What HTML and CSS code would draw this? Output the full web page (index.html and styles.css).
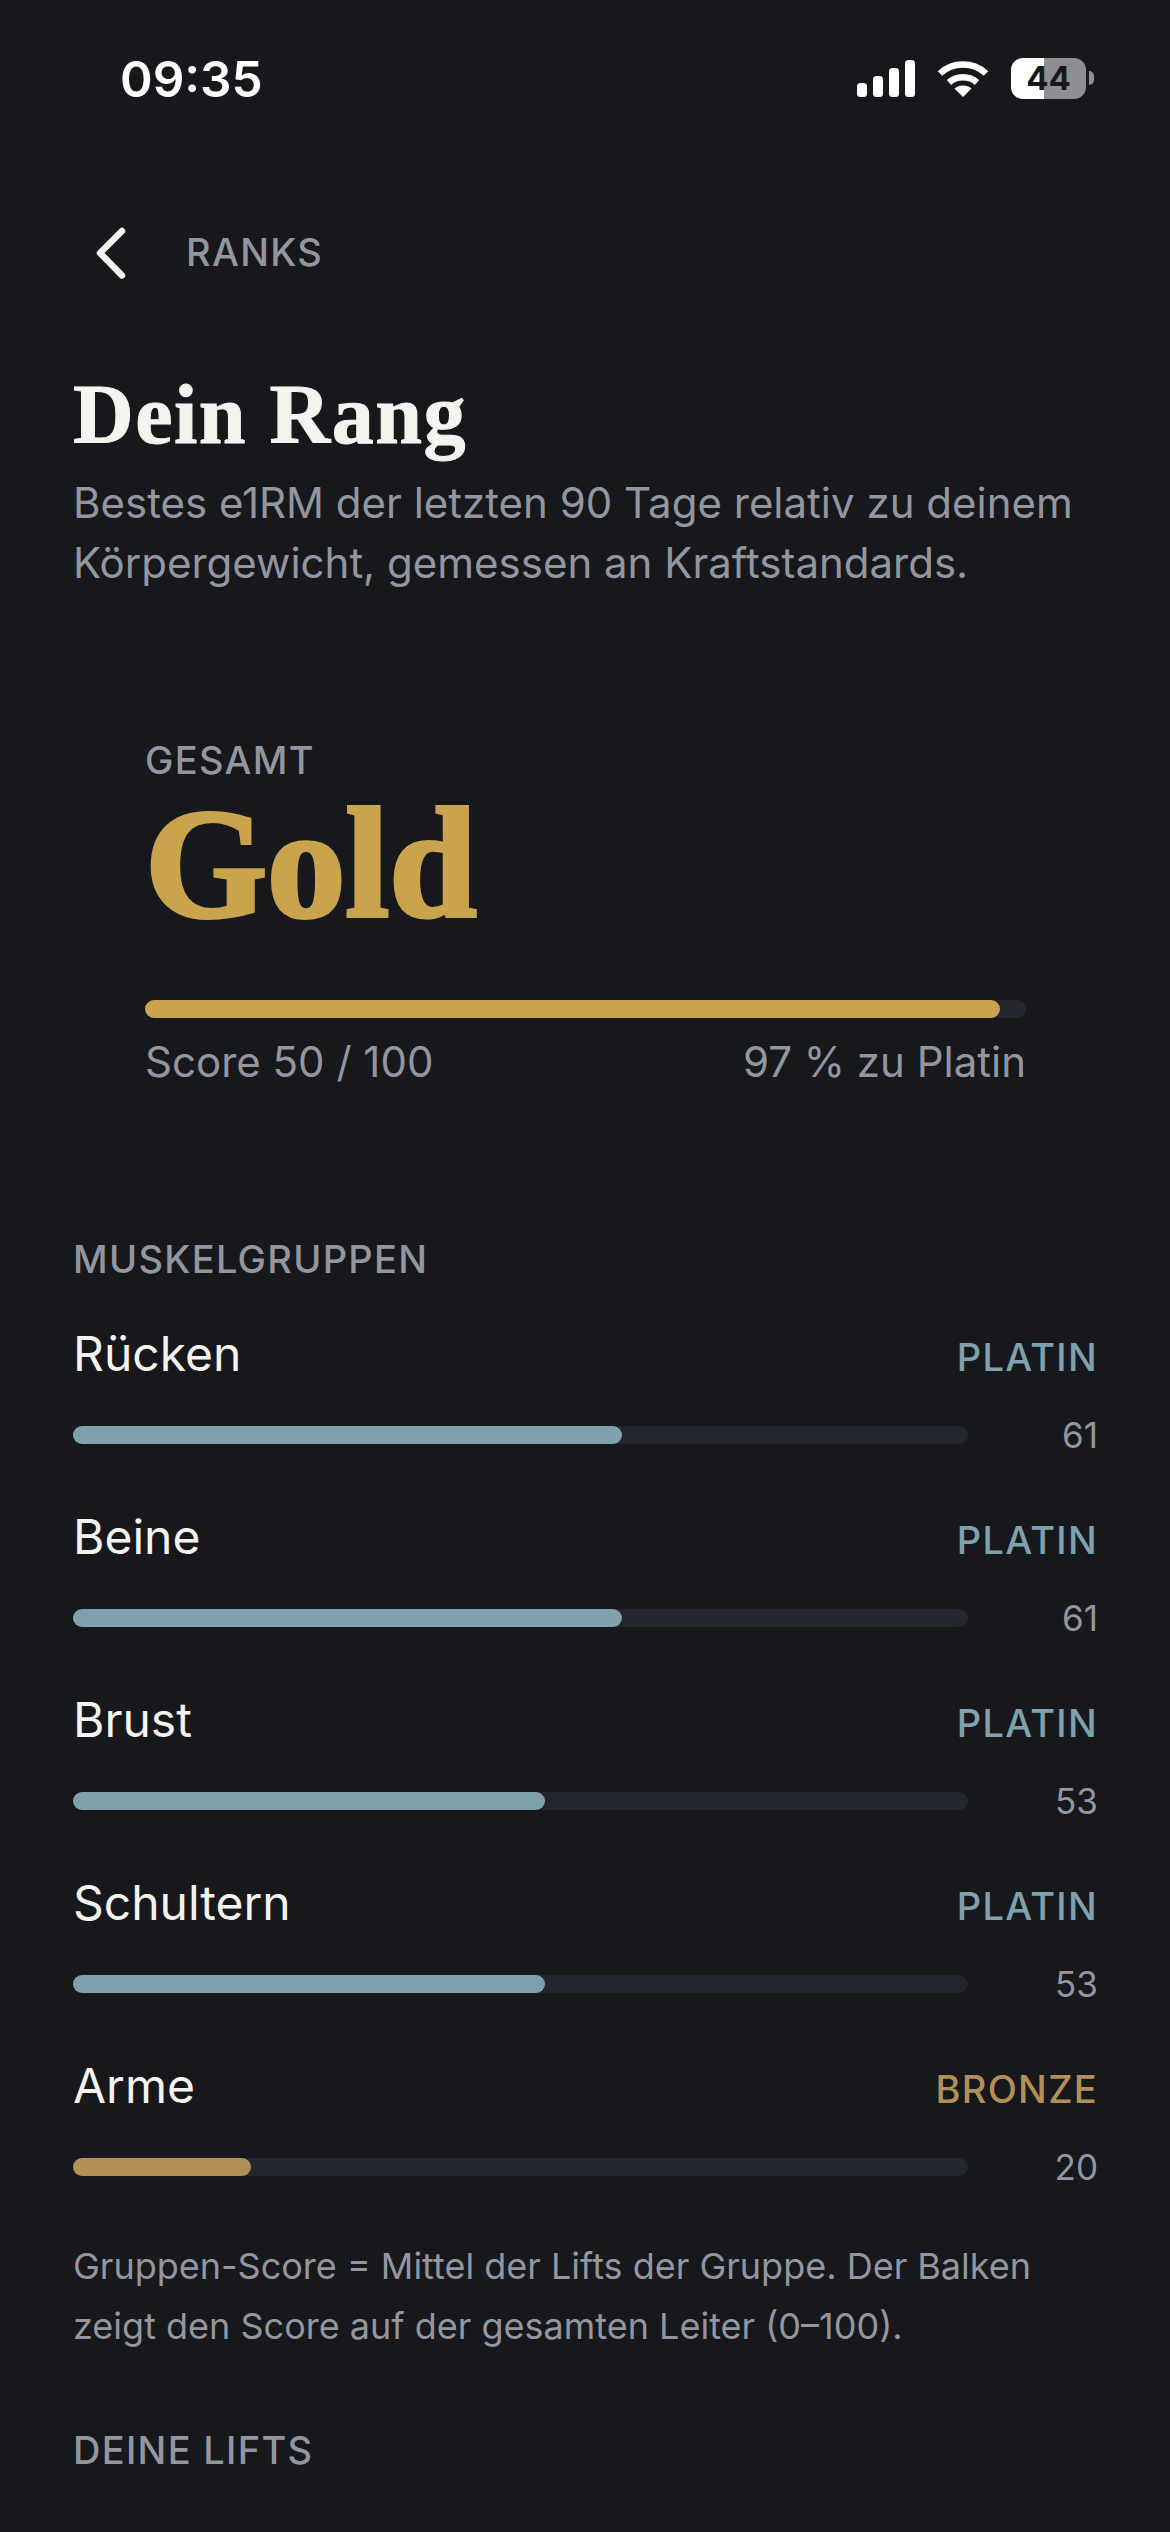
FILE: index.html
```html
<!DOCTYPE html>
<html lang="de">
<head>
    <meta charset="utf-8">
    <title>Dein Rang</title>
    <link rel="stylesheet" href="styles.css">
</head>
<body>
    <div class="status">
        <span class="time">09:35</span>
        <div class="status_icons">
            <svg class="signal" width="58" height="37" viewBox="0 0 58 37" fill="#fff">
                <rect x="0" y="23" width="10" height="14" rx="3.5"/>
                <rect x="16" y="16" width="10" height="21" rx="3.5"/>
                <rect x="32" y="8" width="10" height="29" rx="3.5"/>
                <rect x="48" y="0" width="10" height="37" rx="3.5"/>
            </svg>
            <svg class="wifi" width="52" height="37" viewBox="0 0 52 37" fill="none" stroke="#fff" stroke-width="6.5">
                <path d="M3 13.5C15.500 1.500 36.500 1.500 49 13.500"/>
                <path d="M12 22.500C19.500 15.500 32.500 15.500 40 22.500"/>
                <path d="M26 37L17.500 28.500C22 24.500 30 24.500 34.500 28.500Z" fill="#fff" stroke="none"/>
            </svg>
            <div class="battery"><span>44</span></div>
            <div class="battery_nub"></div>
        </div>
    </div>

    <div class="nav">
        <svg class="back" width="32" height="54" viewBox="0 0 32 54" fill="none" stroke="#f4f3ee" stroke-width="6.5" stroke-linecap="round" stroke-linejoin="round">
            <path d="M27 6L5 28L27 50.500"/>
        </svg>
        <span class="nav_title">RANKS</span>
    </div>

    <div class="page">
        <h1>Dein Rang</h1>
        <p class="intro">Bestes e1RM der letzten 90 Tage relativ zu deinem Körpergewicht, gemessen an Kraftstandards.</p>

        <div class="overall">
            <div class="label">GESAMT</div>
            <div class="rank">Gold</div>
            <div class="track big"><div class="fill gold" style="width: 97%"></div></div>
            <div class="overall_foot">
                <span>Score 50 / 100</span>
                <span>97 % zu Platin</span>
            </div>
        </div>

        <div class="label section">MUSKELGRUPPEN</div>

        <div class="groups">
            <div class="group">
                <div class="group_top"><span class="name">Rücken</span><span class="tier platin">PLATIN</span></div>
                <div class="group_bar"><div class="track"><div class="fill platin_bg" style="width: 61.300%"></div></div><span class="val">61</span></div>
            </div>
            <div class="group">
                <div class="group_top"><span class="name">Beine</span><span class="tier platin">PLATIN</span></div>
                <div class="group_bar"><div class="track"><div class="fill platin_bg" style="width: 61.300%"></div></div><span class="val">61</span></div>
            </div>
            <div class="group">
                <div class="group_top"><span class="name">Brust</span><span class="tier platin">PLATIN</span></div>
                <div class="group_bar"><div class="track"><div class="fill platin_bg" style="width: 52.700%"></div></div><span class="val">53</span></div>
            </div>
            <div class="group">
                <div class="group_top"><span class="name">Schultern</span><span class="tier platin">PLATIN</span></div>
                <div class="group_bar"><div class="track"><div class="fill platin_bg" style="width: 52.700%"></div></div><span class="val">53</span></div>
            </div>
            <div class="group">
                <div class="group_top"><span class="name">Arme</span><span class="tier bronze">BRONZE</span></div>
                <div class="group_bar"><div class="track"><div class="fill bronze_bg" style="width: 19.900%"></div></div><span class="val">20</span></div>
            </div>
        </div>

        <p class="note">Gruppen-Score = Mittel der Lifts der Gruppe. Der Balken zeigt den Score auf der gesamten Leiter (0–100).</p>

        <div class="label lifts">DEINE LIFTS</div>
    </div>
</body>
</html>
```

FILE: styles.css
```css
* {
    padding: 0;
    margin: 0;
    box-sizing: border-box;
}
html, body {
    height: 2532px;
    overflow: hidden;
}
body {
    background-color: #16181c;
    font-family: Inter, "Liberation Sans", sans-serif;
    color: #f4f3ee;
}
.status {
    height: 208px;
    padding: 48px 76px 0 120px;
    display: flex;
    justify-content: space-between;
    align-items: flex-start;
}
.time {
    font-size: 49.5px;
    line-height: 60px;
    font-weight: 600;
    color: #fff;
    padding-top: 1px;
}
.status_icons {
    display: flex;
    align-items: center;
    height: 60px;
}
.wifi {
    margin-left: 22px;
}
.battery {
    width: 75px;
    height: 41px;
    margin-left: 22px;
    border-radius: 12px;
    background: linear-gradient(90deg, #fff 44%, #8f8f91 44%);
    color: #16181c;
    font-size: 33px;
    font-weight: 700;
    line-height: 41px;
    text-align: center;
}
.battery_nub {
    width: 5px;
    height: 14px;
    margin-left: 3px;
    border-radius: 0 7px 7px 0;
    background-color: #8f8f91;
}
.nav {
    height: 88px;
    padding-left: 95px;
    display: flex;
    align-items: center;
}
.nav_title {
    margin-left: 59px;
    font-size: 38px;
    font-weight: 500;
    letter-spacing: 1.3px;
    color: #93969f;
}
.page {
    padding: 0 72px 0 73px;
}
h1 {
    margin-top: 69px;
    font-family: "Liberation Serif", serif;
    font-size: 84px;
    line-height: 100px;
    font-weight: 700;
    letter-spacing: 1.5px;
    -webkit-text-stroke: 1px #f4f3ee;
}
.intro {
    width: 1020px;
    margin-top: 8px;
    font-size: 42px;
    line-height: 60px;
    color: #93969f;
}
.overall {
    padding: 0 72px;
    margin-top: 144px;
}
.label {
    font-size: 38px;
    line-height: 46px;
    font-weight: 500;
    letter-spacing: 1.3px;
    color: #93969f;
}
.rank {
    font-family: "Liberation Serif", serif;
    font-size: 157px;
    line-height: 154px;
    margin-top: 3px;
    font-weight: 700;
    color: #c9a44c;
    -webkit-text-stroke: 4px #c9a44c;
}
.track {
    flex: 1;
    height: 18px;
    border-radius: 9px;
    background-color: #23262d;
}
.track.big {
    margin-top: 60px;
}
.fill {
    height: 100%;
    border-radius: 9px;
}
.gold {
    background-color: #c9a44c;
}
.platin_bg {
    background-color: #7fa1ae;
}
.bronze_bg {
    background-color: #b38f58;
}
.overall_foot {
    display: flex;
    justify-content: space-between;
    margin-top: 14px;
    font-size: 42px;
    line-height: 60px;
    color: #93969f;
}
.section {
    margin-top: 144px;
}
.groups {
    display: flex;
    flex-direction: column;
    gap: 3px;
    margin-top: 42px;
}
.group {
    height: 180px;
}
.group_top {
    display: flex;
    justify-content: space-between;
    align-items: baseline;
    height: 60px;
}
.name {
    font-size: 48px;
    line-height: 60px;
}
.tier {
    font-size: 38px;
    font-weight: 500;
    letter-spacing: 1.3px;
}
.platin {
    color: #7fa1ae;
}
.bronze {
    color: #b38f58;
}
.group_bar {
    display: flex;
    align-items: center;
    margin-top: 31px;
}
.val {
    width: 130px;
    font-size: 35px;
    line-height: 40px;
    text-align: right;
    color: #93969f;
}
.note {
    font-size: 36px;
    line-height: 60px;
    color: #93969f;
}
.lifts {
    margin-top: 71px;
}
```
